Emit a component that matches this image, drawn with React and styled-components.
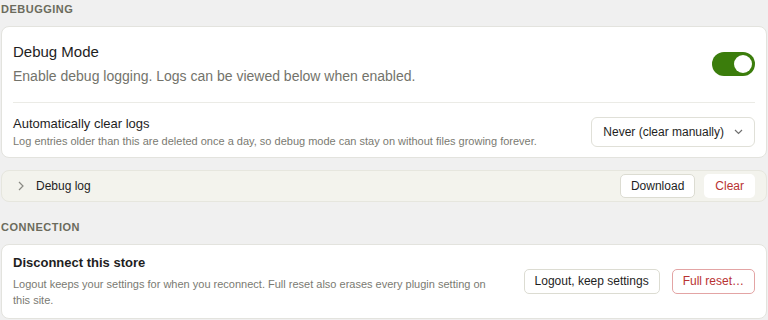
import React from "react";
import styled, { createGlobalStyle } from "styled-components";

const Global = createGlobalStyle`
  html, body { margin: 0; padding: 0; background: #f0f0f0; }
  body { font-family: "Liberation Sans", Arial, sans-serif; color: #1e1e1e; }
  * { box-sizing: border-box; }
`;

const Page = styled.div`
  padding: 1px 1px 0 1px;
  display: flex;
  flex-direction: column;
`;

const SectionHeading = styled.h2`
  margin: ${(p) => (p.$first ? "0" : "17px")} 0 9px 0;
  font-size: 11px;
  line-height: 16px;
  font-weight: 700;
  letter-spacing: 0.5px;
  text-transform: uppercase;
  color: #6b6b5c;
`;

const Card = styled.div`
  background: #fff;
  border: 1px solid #e3e3de;
  border-radius: 8px;
  padding: 0 11px;
`;

const Row = styled.div`
  display: flex;
  align-items: center;
  justify-content: space-between;
  gap: ${(p) => p.$gap || 16}px;
  padding: ${(p) => p.$pad};
  border-top: ${(p) => (p.$divider ? "1px solid #ebebe6" : "none")};
`;

const TextBlock = styled.div`
  flex: 1;
  min-width: 0;
`;

const BigTitle = styled.div`
  font-size: 15px;
  line-height: 20px;
  color: #1e1e1e;
`;

const BigDesc = styled.div`
  margin-top: 4px;
  font-size: 14px;
  line-height: 20px;
  color: #73736b;
`;

const Title = styled.div`
  font-size: 13px;
  line-height: 18px;
  font-weight: ${(p) => (p.$bold ? 700 : 400)};
  color: #1e1e1e;
`;

const Desc = styled.div`
  margin-top: ${(p) => p.$mt || 0}px;
  font-size: 11px;
  line-height: 16px;
  color: #7a7a72;
`;

const Toggle = styled.div`
  position: relative;
  width: 43px;
  height: 24px;
  border-radius: 12px;
  background: #3b7d0c;
  flex-shrink: 0;
`;

const Knob = styled.span`
  position: absolute;
  top: 3px;
  right: 3px;
  width: 18px;
  height: 18px;
  border-radius: 50%;
  background: #fff;
`;

const Select = styled.button`
  display: flex;
  align-items: center;
  gap: 10px;
  height: 30px;
  padding: 0 11px 0 11px;
  border: 1px solid #e0e0d8;
  border-radius: 6px;
  background: #fff;
  font-family: inherit;
  font-size: 12px;
  color: #1e1e1e;
  flex-shrink: 0;
`;

const Bar = styled.div`
  margin-top: 12px;
  display: flex;
  align-items: center;
  height: 32px;
  padding: 0 11px 0 16px;
  background: #f3f3ed;
  border: 1px solid #e6e6de;
  border-radius: 8px;
`;

const BarLabel = styled.span`
  flex: 1;
  display: flex;
  align-items: center;
  gap: 12px;
  font-size: 12px;
  color: #1e1e1e;
`;

const Buttons = styled.div`
  display: flex;
  align-items: center;
  gap: ${(p) => p.$gap || 8}px;
  flex-shrink: 0;
`;

const Button = styled.button`
  height: ${(p) => p.$h || 24}px;
  padding: 0 ${(p) => p.$px || 10}px;
  border-radius: 5px;
  background: #fff;
  font-family: inherit;
  font-size: 12px;
  border: 1px solid
    ${(p) =>
      p.$variant === "ghost"
        ? "transparent"
        : p.$variant === "danger"
        ? "#e3a4a4"
        : "#dcdcd2"};
  color: ${(p) => (p.$variant === "ghost" || p.$variant === "danger" ? "#b83232" : "#1e1e1e")};
`;

const ChevronDown = () => (
  <svg width="9" height="6" viewBox="0 0 9 6" fill="none">
    <path d="M1 1l3.5 3.5L8 1" stroke="#707070" strokeWidth="1.2" />
  </svg>
);

const ChevronRight = () => (
  <svg width="6" height="10" viewBox="0 0 6 10" fill="none">
    <path d="M1 1l4 4-4 4" stroke="#8a8a84" strokeWidth="1.2" />
  </svg>
);

export default function App() {
  return (
    <>
      <Global />
      <Page>
        <SectionHeading $first>Debugging</SectionHeading>
        <Card>
          <Row $pad="15px 0 16px 0">
            <TextBlock>
              <BigTitle>Debug Mode</BigTitle>
              <BigDesc>Enable debug logging. Logs can be viewed below when enabled.</BigDesc>
            </TextBlock>
            <Toggle>
              <Knob />
            </Toggle>
          </Row>
          <Row $divider $pad="12px 0 8px 0">
            <TextBlock>
              <Title>Automatically clear logs</Title>
              <Desc>
                Log entries older than this are deleted once a day, so debug mode can stay on without files growing forever.
              </Desc>
            </TextBlock>
            <Select>
              Never (clear manually)
              <ChevronDown />
            </Select>
          </Row>
        </Card>
        <Bar>
          <BarLabel>
            <ChevronRight />
            Debug log
          </BarLabel>
          <Buttons $gap={9}>
            <Button>Download</Button>
            <Button $variant="ghost">Clear</Button>
          </Buttons>
        </Bar>
        <SectionHeading>Connection</SectionHeading>
        <Card>
          <Row $pad="9px 0 10px 0" $gap={24}>
            <TextBlock>
              <Title $bold>Disconnect this store</Title>
              <Desc $mt={4}>
                Logout keeps your settings for when you reconnect. Full reset also erases every plugin setting on this site.
              </Desc>
            </TextBlock>
            <Buttons $gap={12}>
              <Button $h={25}>Logout, keep settings</Button>
              <Button $h={25} $variant="danger">Full reset…</Button>
            </Buttons>
          </Row>
        </Card>
      </Page>
    </>
  );
}
